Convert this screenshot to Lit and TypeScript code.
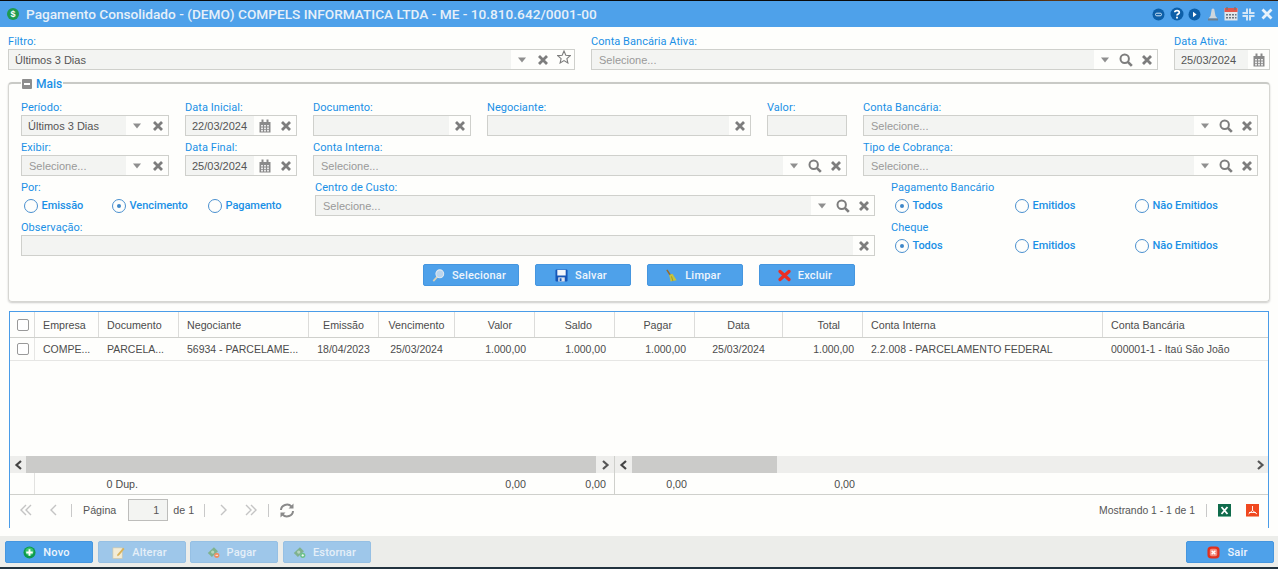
import { LitElement, html, css } from "lit";
import { customElement } from "lit/decorators.js";

const caret = html`<svg width="10" height="6" viewBox="0 0 10 6"><path d="M1 0.5h8L5 5.5z" fill="#8f8f8f"/></svg>`;
const cross = html`<svg width="12" height="12" viewBox="0 0 12 12"><path d="M2 2l8 8M10 2l-8 8" stroke="#7d7d7d" stroke-width="2.8" fill="none"/></svg>`;
const search = html`<svg width="14" height="14" viewBox="0 0 14 14"><circle cx="5.7" cy="5.7" r="4.2" stroke="#7d7d7d" stroke-width="2" fill="none"/><path d="M8.8 8.8l4 4" stroke="#7d7d7d" stroke-width="2.6"/></svg>`;
const cal = html`<svg width="12" height="14" viewBox="0 0 12 14"><path d="M0.5 3h11v10.5H0.5z" fill="#8a8a8a"/><path d="M2.5 0.5h2v3h-2zM7.5 0.5h2v3h-2z" fill="#8a8a8a"/><path d="M2 6h2v1.6H2zM5 6h2v1.6H5zM8 6h2v1.6H8zM2 8.6h2v1.6H2zM5 8.6h2v1.6H5zM8 8.6h2v1.6H8zM2 11h2v1.4H2zM5 11h2v1.4H5zM8 11h2v1.4H8z" fill="#e8e8e8"/></svg>`;
const star = html`<svg class="up" width="14" height="14" viewBox="0 0 14 14"><path d="M7 1l1.8 4.2 4.5.4-3.4 3 1 4.4L7 10.6 3.1 13l1-4.4-3.4-3 4.5-.4z" fill="none" stroke="#7d7d7d" stroke-width="1.1"/></svg>`;
const icons: Record<string, any> = { caret, cross, search, cal, star };

const dbl = (d: string) => html`<svg width="14" height="12" viewBox="0 0 14 12"><path d="${d}" fill="none" stroke="#c4c4c4" stroke-width="1.4"/></svg>`;
const first = dbl("M7 1L2 6l5 5M12 1L7 6l5 5");
const last = dbl("M2 1l5 5-5 5M7 1l5 5-5 5");
const prev = dbl("M9 1L4 6l5 5");
const next = dbl("M5 1l5 5-5 5");
const chevL = html`<svg width="9" height="10" viewBox="0 0 9 10"><path d="M7 1L2.500 5 7 9" fill="none" stroke="#444" stroke-width="2.200"/></svg>`;
const chevR = html`<svg width="9" height="10" viewBox="0 0 9 10"><path d="M2 1l4.500 4L2 9" fill="none" stroke="#555" stroke-width="2.200"/></svg>`;

const btnIcons: Record<string, any> = {
  lens: html`<svg viewBox="0 0 14 15"><path d="M1 14l5-5.500" stroke="#d9d2b8" stroke-width="2"/><circle cx="8.500" cy="5.500" r="4.500" fill="#b9d5ee" stroke="#dfe8ef" stroke-width="1.200"/></svg>`,
  save: html`<svg viewBox="0 0 14 14"><rect x="0.500" y="0.500" width="13" height="13" rx="1" fill="#1657b8"/><rect x="2.500" y="1" width="9" height="6" fill="#f4f6fa"/><rect x="3.500" y="9" width="7" height="4.500" fill="#dfe5ee"/><rect x="5" y="10" width="2" height="3" fill="#1657b8"/></svg>`,
  broom: html`<svg viewBox="0 0 14 14"><path d="M2 1l4 6" stroke="#9a6a28" stroke-width="1.600"/><path d="M4.500 6.500L8 5l4.500 7-6.500 1.500z" fill="#c7c33c"/><path d="M7 8l1.500 5" stroke="#8f8d22" stroke-width="0.800"/></svg>`,
  xred: html`<svg viewBox="0 0 16 14"><path d="M2.500 2l11 10M13.500 2l-11 10" stroke="#ec2f24" stroke-width="4" stroke-linecap="round"/></svg>`,
  plus: html`<svg viewBox="0 0 14 14"><circle cx="7" cy="7" r="6.500" fill="#0f9a4b"/><circle cx="7" cy="6" r="4.500" fill="#39c46f"/><path d="M7 3.500v7M3.500 7h7" stroke="#fff" stroke-width="2"/></svg>`,
  note: html`<svg viewBox="0 0 14 14"><rect x="1" y="2" width="10" height="11.500" fill="#f3ecd6" stroke="#cfc6a8" stroke-width="0.700"/><path d="M6 9l6-7 1.500 1.200-6 7-2 .8z" fill="#d9b25a"/></svg>`,
  moneyO: html`<svg viewBox="0 0 16 15"><path d="M1 8L8.500 1l5 5-7.500 7z" fill="#7fb28f"/><circle cx="7" cy="7" r="2" fill="#b5d5bf"/><circle cx="12" cy="11" r="3.200" fill="#ec8f63"/><path d="M10.500 11h3" stroke="#fff"/></svg>`,
  moneyG: html`<svg viewBox="0 0 16 15"><path d="M1 8L8.500 1l5 5-7.500 7z" fill="#7fb28f"/><circle cx="7" cy="7" r="2" fill="#b5d5bf"/><circle cx="12" cy="11" r="3.200" fill="#6cc08a"/><path d="M10.500 11h3M12 9.500v3" stroke="#fff"/></svg>`,
  exit: html`<svg viewBox="0 0 14 14"><rect x="0.500" y="0.500" width="13" height="13" rx="4" fill="#e0301e"/><rect x="3" y="3" width="8" height="8" rx="2" fill="#f58a7e"/><path d="M5 5l4 4M9 5l-4 4" stroke="#fff" stroke-width="1.500"/></svg>`,
};

interface Field { label: string; w: number; val?: string; ph?: boolean; ic: string[]; }

const row1: Field[] = [
  { label: "Período:", w: 148, val: "Últimos 3 Dias", ic: ["caret", "cross"] },
  { label: "Data Inicial:", w: 112, val: "22/03/2024", ic: ["cal", "cross"] },
  { label: "Documento:", w: 158, ic: ["cross"] },
  { label: "Negociante:", w: 264, ic: ["cross"] },
  { label: "Valor:", w: 80, ic: [] },
  { label: "Conta Bancária:", w: 395, val: "Selecione...", ph: true, ic: ["caret", "search", "cross"] },
];
const row2: Field[] = [
  { label: "Exibir:", w: 148, val: "Selecione...", ph: true, ic: ["caret", "cross"] },
  { label: "Data Final:", w: 112, val: "25/03/2024", ic: ["cal", "cross"] },
  { label: "Conta Interna:", w: 534, val: "Selecione...", ph: true, ic: ["caret", "search", "cross"] },
  { label: "Tipo de Cobrança:", w: 395, val: "Selecione...", ph: true, ic: ["caret", "search", "cross"] },
];
const topRow: Field[] = [
  { label: "Filtro:", w: 567, val: "Últimos 3 Dias", ic: ["caret", "cross", "star"] },
  { label: "Conta Bancária Ativa:", w: 567, val: "Selecione...", ph: true, ic: ["caret", "search", "cross"] },
  { label: "Data Ativa:", w: 96, val: "25/03/2024", ic: ["cal"] },
];

const cols = [
  { t: "", cls: "" },
  { t: "Empresa", cls: "" },
  { t: "Documento", cls: "" },
  { t: "Negociante", cls: "" },
  { t: "Emissão", cls: "c" },
  { t: "Vencimento", cls: "c" },
  { t: "Valor", cls: "n" },
  { t: "Saldo", cls: "n" },
  { t: "Pagar", cls: "n" },
  { t: "Data", cls: "c" },
  { t: "Total", cls: "n" },
  { t: "Conta Interna", cls: "" },
  { t: "Conta Bancária", cls: "" },
];
const rowVals = ["", "COMPE...", "PARCELA...", "56934 - PARCELAME...", "18/04/2023", "25/03/2024", "1.000,00", "1.000,00", "1.000,00", "25/03/2024", "1.000,00", "2.2.008 - PARCELAMENTO FEDERAL", "000001-1 - Itaú São João"];

@customElement("app-root")
export class AppRoot extends LitElement {
  static styles = css`
    :host { display: block; height: 569px; width: 1278px; overflow: hidden; background: #fefefc; font-family: Roboto, "Liberation Sans", sans-serif; font-size: 11px; color: #444; }
    .page { height: 569px; display: flex; flex-direction: column; }
    .topline { height: 1px; background: linear-gradient(90deg, #0a0a0a 0, #0a0a0a 76%, #5a3312 82%, #7a4a1a 92%, #2a1a10 100%); }
    .head { height: 26px; flex: none; background: #4ea1ea; display: flex; align-items: center; padding: 0 4px 0 7px; }
    .logo { width: 12px; height: 12px; border-radius: 50%; background: #1e9a50; color: #fff; font: bold 9px/12px "Liberation Sans", sans-serif; text-align: center; margin-right: 7px; }
    .title { font-size: 13.650px; font-weight: 500; color: #e6f0f9; white-space: nowrap; flex: 1; }
    .tools { display: flex; align-items: center; gap: 3px; }
    .tool { width: 15px; height: 16px; display: flex; align-items: center; justify-content: center; }

    .top { display: flex; gap: 16px; padding: 8px 8px 0; height: 35px; flex: none; }
    .field { display: flex; flex-direction: column; flex: none; }
    .lbl { height: 14px; line-height: 13px; color: #1a90e6; white-space: nowrap; letter-spacing: 0.05px; }
    .box { height: 21px; box-sizing: border-box; border: 1px solid #cfd0cc; background: #f3f4f2; display: flex; align-items: stretch; color: #555; }
    .box .v { flex: 1; padding-left: 6px; line-height: 20px; white-space: nowrap; overflow: hidden; font-family: "Liberation Sans", Arial, sans-serif; }
    .box .v.ph { color: #999; padding-left: 7px; }
    .box .ics { flex: none; display: flex; align-items: center; background: #fefefc; }
    .ic { width: 21px; height: 18px; display: flex; align-items: center; justify-content: center; }
    .up { margin-top: -5px; }

    .fs { position: relative; margin: 12px 8px 0; height: 220px; box-sizing: border-box; flex: none; border: 1px solid #d6d6d2; border-top: 2px solid #c9cac6; border-radius: 4px; box-shadow: 0 1px 2px rgba(0,0,0,.2); padding: 17px 0 0 12px; display: flex; flex-direction: column; gap: 5px; }
    .legend { position: absolute; left: 12px; top: -7px; height: 14px; padding: 0 1px; background: #fefefc; display: flex; align-items: center; gap: 4px; color: #1a90e6; font-size: 12px; font-weight: 500; }
    .minus { width: 10px; height: 10px; background: #8d8d8d; border-radius: 1px; display: flex; align-items: center; justify-content: center; }
    .minus i { display: block; width: 6px; height: 2px; background: #fff; }
    .row { display: flex; gap: 16px; height: 35px; }
    .radios { display: flex; height: 21px; align-items: center; }
    .radio { display: flex; align-items: center; gap: 3.500px; color: #1a90e6; font-weight: 500; letter-spacing: -0.05px; white-space: nowrap; flex: none; }
    .circ { width: 14px; height: 14px; box-sizing: border-box; border: 1.300px solid #4a90cf; border-radius: 50%; background: #fefefc; display: flex; align-items: center; justify-content: center; }
    .circ i { width: 4px; height: 4px; border-radius: 50%; background: #3f87c8; }
    .r-left { padding-left: 3px; }
    .w88 { width: 88px; } .w96 { width: 96px; } .w120 { width: 120px; }
    .r-right { padding-left: 4px; }
    .spacer15 { width: 278px; flex: none; }
    .actions { display: flex; gap: 16px; padding-left: 402px; margin-top: 3px; }
    .btn { width: 96px; height: 22px; box-sizing: border-box; background: #4ea1ea; border: 1px solid #4596df; border-radius: 2px; display: flex; align-items: center; justify-content: center; gap: 7px; padding-right: 4px; color: #eef5fc; font-weight: 500; letter-spacing: 0.2px; flex: none; white-space: nowrap; }
    .btn svg { width: 13px; height: 13px; flex: none; }
    .btn.sm { width: 88px; padding-right: 5px; }
    .btn.off { background: #9ec7ea; border-color: #96c0e4; color: #e5eff8; }

    .grid { margin: 9px 9px 0 9px; height: 217px; box-sizing: border-box; flex: none; border: 0 solid #4a9ce8; border-width: 1px 1px 0 1px; display: flex; flex-direction: column; font-family: "Liberation Sans", Arial, sans-serif; font-size: 10.700px; color: #4c4c4c; }
    .tr { display: grid; grid-template-columns: 25px 64px 80px 130px 70px 76px 80px 80px 80px 88px 80px 240px 1fr; flex: none; }
    .th { height: 25px; border-bottom: 1px solid #cfd0cc; }
    .td { height: 22px; border-bottom: 1px solid #e6e6e4; font-size: 10.500px; }
    .cell { box-sizing: border-box; padding-left: 8px; display: flex; align-items: center; border-right: 1px solid #dcdcda; white-space: nowrap; overflow: hidden; }
    .td .cell { border-right-color: transparent; }
    .td .cell:first-child { border-right-color: #e6e6e4; }
    .cell:last-child { border-right: 0; }
    .cell.c { justify-content: center; padding: 0; }
    .th .cell.n { justify-content: flex-end; padding: 0 22px 0 0; }
    .td .cell.n { justify-content: flex-end; padding: 0 8px 0 0; }
    .chk { width: 10px; height: 10px; border: 1px solid #999; border-radius: 2px; background: #fff; margin-left: -1px; flex: none; }
    .blank { flex: 1; }
    .bars { display: flex; height: 17px; flex: none; }
    .bar { display: flex; background: #eeeeec; flex: none; }
    .bar.l { width: 604px; }
    .bar.r { flex: 1; border-left: 1px solid #cfd0cc; }
    .arrow { width: 16px; flex: none; display: flex; align-items: center; justify-content: center; }
    .arrow.wide { width: 18px; }
    .arrow.mid { width: 17px; }
    .thumb { background: #cbcbc9; flex: none; }
    .thumb.l { flex: 1; }
    .thumb.r { width: 145px; }
    .track { flex: 1; }
    .sum { display: grid; grid-template-columns: 25px 111px 388px 80px 1px 80px 168px 1fr; height: 21px; border-bottom: 1px solid #cfd0cc; flex: none; }
    .sum div { display: flex; align-items: center; justify-content: flex-end; padding-right: 8px; box-sizing: border-box; white-space: nowrap; }
    .sum .b0 { border-right: 1px solid #e2e2e0; padding: 0; }
    .sum .bd { background: #cfd0cc; padding: 0; }
    .pager { height: 33px; flex: none; display: flex; align-items: center; padding-left: 2px; padding-bottom: 3px; box-sizing: border-box; color: #555; }
    .slot { width: 28px; display: flex; justify-content: center; align-items: center; flex: none; }
    .sep { width: 1px; height: 13px; background: #c9c9c9; flex: none; }
    .page-in { width: 40px; height: 22px; box-sizing: border-box; border: 1px solid #bdbdbb; background: #f3f4f2; text-align: right; line-height: 20px; padding-right: 8px; flex: none; }
    .m3 { margin-left: 3px; } .m11 { margin-left: 11px; } .m12 { margin-left: 12px; } .m5 { margin-left: 5px; } .m10 { margin-left: 10px; } .m4 { margin-left: 4px; }
    .push { margin-left: auto; font-size: 10.400px; }
    .xls, .pdf { width: 13px; height: 13px; flex: none; display: block; }
    .m15 { margin-left: 15px; } .mr9 { margin-right: 9px; }

    .gap8 { height: 8px; flex: none; }
    .foot { height: 31px; flex: none; background: #ecedea; display: flex; align-items: flex-start; padding: 5px 4px 0 5px; gap: 5px; box-sizing: border-box; }
    .foot .g4 { margin-left: -1px; }
    .foot .end { margin-left: auto; }
    .bottom { flex: 1; background: #22333f; }
  `;

  private renderField(f: Field) {
    return html`<div class="field" style="width:${f.w}px">
      <div class="lbl">${f.label}</div>
      <div class="box">
        <div class="v ${f.ph ? "ph" : ""}">${f.val ?? ""}</div>
        ${f.ic.length ? html`<div class="ics">${f.ic.map((i) => html`<span class="ic">${icons[i]}</span>`)}</div>` : ""}
      </div>
    </div>`;
  }

  private radio(label: string, on: boolean, cls: string) {
    return html`<div class="radio ${cls}"><span class="circ">${on ? html`<i></i>` : ""}</span>${label}</div>`;
  }

  private btn(icon: string, label: string, cls = "") {
    return html`<div class="btn ${cls}">${btnIcons[icon]}<span>${label}</span></div>`;
  }

  private radioGroup(label: string) {
    return html`<div class="field" style="width:367px">
      <div class="lbl">${label}</div>
      <div class="radios r-right">
        ${this.radio("Todos", true, "w120")}
        ${this.radio("Emitidos", false, "w120")}
        ${this.radio("Não Emitidos", false, "")}
      </div>
    </div>`;
  }

  render() {
    return html`<div class="page">
      <div class="topline"></div>
      <div class="head">
        <span class="logo">$</span>
        <span class="title">Pagamento Consolidado - (DEMO) COMPELS INFORMATICA LTDA - ME - 10.810.642/0001-00</span>
        <div class="tools">
          <span class="tool"><svg width="13" height="13" viewBox="0 0 13 13"><circle cx="6.500" cy="6.500" r="6" fill="#0d5fa8"/><rect x="3.500" y="5.200" width="6" height="2.600" rx="1.300" fill="none" stroke="#cfe4f6"/></svg></span>
          <span class="tool"><svg width="14" height="14" viewBox="0 0 14 14"><circle cx="7" cy="7" r="6.500" fill="#0d5fa8"/><path d="M4.800 5.200C4.800 3 9.300 3 9.300 5.400 9.300 7 7 7 7 8.600" fill="none" stroke="#fff" stroke-width="1.700"/><rect x="6.100" y="9.700" width="1.800" height="1.800" fill="#fff"/></svg></span>
          <span class="tool"><svg width="13" height="13" viewBox="0 0 13 13"><circle cx="6.500" cy="6.500" r="6" fill="#0d5fa8"/><path d="M5 3.800l3.600 2.700L5 9.200z" fill="#fff"/></svg></span>
          <span class="tool"><svg width="12" height="13" viewBox="0 0 12 13"><path d="M6 0.500c1 0 1.500.8 1.500 2L8.500 8l2 2.500h-9L3.500 8l1-5.500c0-1.200.5-2 1.500-2z" fill="#cfd6dc"/><rect x="1" y="10.500" width="10" height="2" fill="#6f7f8c"/></svg></span>
          <span class="tool"><svg width="14" height="14" viewBox="0 0 14 14"><rect x="0.500" y="1" width="13" height="12.500" fill="#e3e6ea"/><rect x="0.500" y="1" width="13" height="4" fill="#e2574c"/><path d="M3 0v3M11 0v3" stroke="#777" stroke-width="1.400"/><path d="M2 7h2v1.500H2zM5 7h2v1.500H5zM8 7h2v1.500H8zM11 7h1.500v1.500H11zM2 10h2v1.500H2zM5 10h2v1.500H5zM8 10h2v1.500H8zM11 10h1.500v1.500H11z" fill="#6b7580"/></svg></span>
          <span class="tool"><svg width="13" height="13" viewBox="0 0 13 13"><path d="M5 0.500V5H0.500M8 0.500V5h4.500M5 12.500V8H0.500M8 12.500V8h4.500" fill="none" stroke="#d3e6f7" stroke-width="2"/></svg></span>
          <span class="tool"><svg width="12" height="12" viewBox="0 0 12 12"><path d="M1.500 1.500l9 9M10.500 1.500l-9 9" stroke="#e8f2fb" stroke-width="2.800"/></svg></span>
        </div>
      </div>

      <div class="top">${topRow.map((f) => this.renderField(f))}</div>

      <div class="fs">
        <div class="legend"><span class="minus"><i></i></span>Mais</div>
        <div class="row">${row1.map((f) => this.renderField(f))}</div>
        <div class="row">${row2.map((f) => this.renderField(f))}</div>
        <div class="row">
          <div class="field spacer15">
            <div class="lbl">Por:</div>
            <div class="radios r-left">
              ${this.radio("Emissão", false, "w88")}
              ${this.radio("Vencimento", true, "w96")}
              ${this.radio("Pagamento", false, "")}
            </div>
          </div>
          ${this.renderField({ label: "Centro de Custo:", w: 560, val: "Selecione...", ph: true, ic: ["caret", "search", "cross"] })}
          ${this.radioGroup("Pagamento Bancário")}
        </div>
        <div class="row">
          ${this.renderField({ label: "Observação:", w: 854, ic: ["cross"] })}
          ${this.radioGroup("Cheque")}
        </div>
        <div class="actions">
          ${this.btn("lens", "Selecionar")}
          ${this.btn("save", "Salvar")}
          ${this.btn("broom", "Limpar")}
          ${this.btn("xred", "Excluir")}
        </div>
      </div>

      <div class="grid">
        <div class="tr th">
          ${cols.map((c, i) => html`<div class="cell ${c.cls}">${i === 0 ? html`<span class="chk"></span>` : c.t}</div>`)}
        </div>
        <div class="tr td">
          ${rowVals.map((v, i) => html`<div class="cell ${cols[i].cls}">${i === 0 ? html`<span class="chk"></span>` : v}</div>`)}
        </div>
        <div class="blank"></div>
        <div class="bars">
          <div class="bar l">
            <span class="arrow">${chevL}</span><span class="thumb l"></span><span class="arrow wide">${chevR}</span>
          </div>
          <div class="bar r">
            <span class="arrow mid">${chevL}</span><span class="thumb r"></span><span class="track"></span><span class="arrow">${chevR}</span>
          </div>
        </div>
        <div class="sum">
          <div class="b0"></div><div>0 Dup.</div><div>0,00</div><div>0,00</div><div class="bd"></div><div>0,00</div><div>0,00</div><div></div>
        </div>
        <div class="pager">
          <span class="slot">${first}</span>
          <span class="slot">${prev}</span>
          <span class="sep m3"></span>
          <span class="m11">Página</span>
          <span class="page-in m12">1</span>
          <span class="m5">de 1</span>
          <span class="sep m10"></span>
          <span class="slot m4">${next}</span>
          <span class="slot">${last}</span>
          <span class="sep m3"></span>
          <span class="slot m4"><svg width="16" height="15" viewBox="0 0 16 15"><path d="M2 7a6 5.500 0 0 1 10.500-3.500M14 8a6 5.500 0 0 1-10.500 3.500" fill="none" stroke="#8a8a8a" stroke-width="2"/><path d="M14.500 0.500v5h-5zM1.500 14.500v-5h5z" fill="#8a8a8a"/></svg></span>
          <span class="push">Mostrando 1 - 1 de 1</span>
          <span class="sep m11"></span>
          <svg class="xls m11" viewBox="0 0 13 13"><rect width="13" height="13" fill="#0f6b4b"/><rect y="12" width="13" height="1" fill="#6fb59a"/><path d="M3.500 3l6 7M9.500 3l-6 7" stroke="#fff" stroke-width="1.800"/></svg>
          <svg class="pdf m15 mr9" viewBox="0 0 13 13"><rect width="13" height="13" fill="#f0481f"/><rect y="12" width="13" height="1" fill="#f7a184"/><path d="M6.500 2v4.500L2.500 10M6.500 6.500L11 10M3 8.500h7" fill="none" stroke="#fff" stroke-width="0.900"/></svg>
        </div>
      </div>

      <div class="gap8"></div>
      <div class="foot">
        ${this.btn("plus", "Novo", "sm")}
        ${this.btn("note", "Alterar", "sm off")}
        ${this.btn("moneyO", "Pagar", "sm off g4")}
        ${this.btn("moneyG", "Estornar", "sm off")}
        ${this.btn("exit", "Sair", "sm end")}
      </div>
      <div class="bottom"></div>
    </div>`;
  }
}
